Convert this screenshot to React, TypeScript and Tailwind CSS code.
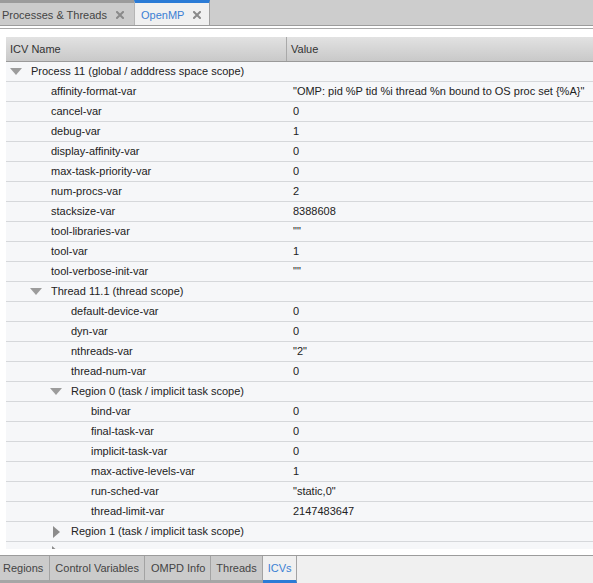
import React from 'react';

type Row = { depth: number; name: string; value?: string; kind: 'leaf' | 'open' | 'closed' };

const rows: Row[] = [
  { depth: 0, name: 'Process 11 (global / adddress space scope)', kind: 'open' },
  { depth: 1, name: 'affinity-format-var', value: '"OMP: pid %P tid %i thread %n bound to OS proc set {%A}"', kind: 'leaf' },
  { depth: 1, name: 'cancel-var', value: '0', kind: 'leaf' },
  { depth: 1, name: 'debug-var', value: '1', kind: 'leaf' },
  { depth: 1, name: 'display-affinity-var', value: '0', kind: 'leaf' },
  { depth: 1, name: 'max-task-priority-var', value: '0', kind: 'leaf' },
  { depth: 1, name: 'num-procs-var', value: '2', kind: 'leaf' },
  { depth: 1, name: 'stacksize-var', value: '8388608', kind: 'leaf' },
  { depth: 1, name: 'tool-libraries-var', value: '""', kind: 'leaf' },
  { depth: 1, name: 'tool-var', value: '1', kind: 'leaf' },
  { depth: 1, name: 'tool-verbose-init-var', value: '""', kind: 'leaf' },
  { depth: 1, name: 'Thread 11.1 (thread scope)', kind: 'open' },
  { depth: 2, name: 'default-device-var', value: '0', kind: 'leaf' },
  { depth: 2, name: 'dyn-var', value: '0', kind: 'leaf' },
  { depth: 2, name: 'nthreads-var', value: '"2"', kind: 'leaf' },
  { depth: 2, name: 'thread-num-var', value: '0', kind: 'leaf' },
  { depth: 2, name: 'Region 0 (task / implicit task scope)', kind: 'open' },
  { depth: 3, name: 'bind-var', value: '0', kind: 'leaf' },
  { depth: 3, name: 'final-task-var', value: '0', kind: 'leaf' },
  { depth: 3, name: 'implicit-task-var', value: '0', kind: 'leaf' },
  { depth: 3, name: 'max-active-levels-var', value: '1', kind: 'leaf' },
  { depth: 3, name: 'run-sched-var', value: '"static,0"', kind: 'leaf' },
  { depth: 3, name: 'thread-limit-var', value: '2147483647', kind: 'leaf' },
  { depth: 2, name: 'Region 1 (task / implicit task scope)', kind: 'closed' },
];

function CloseIcon() {
  return (
    <svg width="8" height="8" viewBox="0 0 8 8" className="shrink-0">
      <path d="M1 1 L7 7 M7 1 L1 7" stroke="#8a8a8a" strokeWidth="2" strokeLinecap="square" />
    </svg>
  );
}

function Toggle({ open }: { open: boolean }) {
  return (
    <span className="flex h-[20px] w-[12px] shrink-0 items-center justify-center">
      {open ? (
        <svg width="12" height="7" viewBox="0 0 12 7">
          <polygon points="0,0 12,0 6,7" fill="#9c9c9c" />
        </svg>
      ) : (
        <svg width="7" height="12" viewBox="0 0 7 12">
          <polygon points="0,0 7,6 0,12" fill="#8c8c8c" />
        </svg>
      )}
    </span>
  );
}

function TreeRow({ row }: { row: Row }) {
  const isGroup = row.kind !== 'leaf';
  return (
    <div className="flex h-[20px] shrink-0 border-b border-[#d6d8db] bg-[#f6f7f9] text-[#222]">
      <div
        className="flex w-[281px] shrink-0 items-center whitespace-nowrap"
        style={{ paddingLeft: isGroup ? 4 + 20 * row.depth : 25 + 20 * row.depth }}
      >
        {isGroup && <Toggle open={row.kind === 'open'} />}
        <span className={isGroup ? 'pl-[9px]' : ''}>{row.name}</span>
      </div>
      <div className="flex items-center whitespace-nowrap pl-[6px]">{row.value}</div>
    </div>
  );
}

const bottomTab =
  'flex items-center border-r border-b-[3px] border-r-[#a3a3a3] border-b-[#a6a6a6] bg-[#cbcbcb] text-[#444]';

export default function App() {
  return (
    <div
      className="flex h-[583px] w-[593px] flex-col overflow-hidden bg-white text-[11px]"
      style={{ fontFamily: '"Liberation Sans", Arial, sans-serif' }}
    >
      <div className="flex h-[26px] shrink-0 border-b border-[#9c9c9c] bg-[#cdcdcd]">
        <div className="flex items-center gap-[9px] border-t-[3px] border-[#9b9b9b] bg-[#cbcbcb] pl-[2px] pr-[10px] pt-[2px] text-[#444]">
          <span>Processes &amp; Threads</span>
          <CloseIcon />
        </div>
        <div className="flex items-center gap-[9px] border-l border-r border-t-[3px] border-l-[#b5b5b5] border-r-[#a0a0a0] border-t-[#2b7bd6] bg-[#f0f0f0] pl-[6px] pr-[8px] pt-[2px] text-[#3b7fd4]">
          <span>OpenMP</span>
          <CloseIcon />
        </div>
      </div>
      <div className="h-[3px] shrink-0 border-b border-[#a9a9a9] bg-white" />
      <div className="flex shrink-0 flex-col pl-[6px] pt-[8px] pb-[6px]">
        <div className="flex h-[25px] shrink-0 border-b border-[#9a9a9a] bg-gradient-to-b from-[#e2e2e2] to-[#c9c9c9] text-[#333]">
          <div className="flex w-[281px] shrink-0 items-center border-r border-[#a9a9a9] pl-[4px]">ICV Name</div>
          <div className="flex items-center pl-[4px]">Value</div>
        </div>
        <div className="flex h-[487px] flex-col overflow-hidden bg-[#f6f7f9]">
          {rows.map((r, i) => (
            <TreeRow key={i} row={r} />
          ))}
          <div className="relative h-[20px] shrink-0">
            <svg width="7" height="12" viewBox="0 0 7 12" className="absolute left-[46px] top-[4px]">
              <polygon points="0,0 7,6 0,12" fill="#8c8c8c" />
            </svg>
          </div>
        </div>
      </div>
      <div className="flex h-[28px] shrink-0 border-t border-[#9c9c9c] bg-[#f0f0f0]">
        <div className={`${bottomTab} pl-[3px] pr-[6px]`}>Regions</div>
        <div className={`${bottomTab} px-[5px]`}>Control Variables</div>
        <div className={`${bottomTab} pl-[6px] pr-[5px]`}>OMPD Info</div>
        <div className={`${bottomTab} px-[5px]`}>Threads</div>
        <div className="flex items-center border-r border-b-[3px] border-r-[#a3a3a3] border-b-[#2b7bd6] bg-[#f0f0f0] pl-[5px] pr-[4px] text-[#3b7fd4]">
          ICVs
        </div>
      </div>
    </div>
  );
}
